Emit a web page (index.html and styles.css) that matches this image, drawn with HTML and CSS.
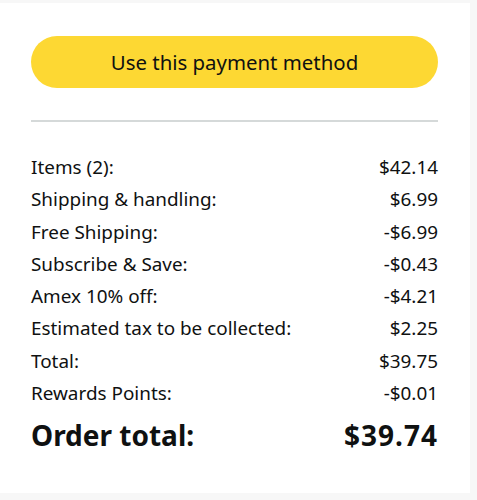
FILE: index.html
```html
<!DOCTYPE html>
<html>
<head>
<meta charset="utf-8">
<link rel="stylesheet" href="styles.css">
</head>
<body>
<div class="card">
  <button class="pay-btn">Use this payment method</button>
  <hr class="divider">
  <div class="summary">
    <div class="row"><span>Items (2):</span><span>$42.14</span></div>
    <div class="row"><span>Shipping &amp; handling:</span><span>$6.99</span></div>
    <div class="row"><span>Free Shipping:</span><span>-$6.99</span></div>
    <div class="row"><span>Subscribe &amp; Save:</span><span>-$0.43</span></div>
    <div class="row"><span>Amex 10% off:</span><span>-$4.21</span></div>
    <div class="row"><span>Estimated tax to be collected:</span><span>$2.25</span></div>
    <div class="row"><span>Total:</span><span>$39.75</span></div>
    <div class="row"><span>Rewards Points:</span><span>-$0.01</span></div>
    <div class="row total"><span>Order total:</span><span class="amt">$39.74</span></div>
  </div>
</div>
</body>
</html>
```
FILE: styles.css
```css
html, body {
  margin: 0;
  padding: 0;
}
body {
  background: #f7f7f7;
  font-family: "Noto Sans", "Open Sans", sans-serif;
  color: #0f1111;
  padding-top: 3px;
}
.card {
  width: 470px;
  height: 490px;
  box-sizing: border-box;
  background: #fff;
  padding: 33px 32px 0 31px;
}
.pay-btn {
  display: block;
  width: 100%;
  height: 52px;
  border: none;
  border-radius: 26px;
  background: #fdd833;
  color: #0f1111;
  font-family: inherit;
  font-size: 20.4px;
  padding: 0;
}
.divider {
  border: none;
  border-top: 2px solid #d5d9d9;
  margin: 32px 0 29px;
}
.summary {
  display: flex;
  flex-direction: column;
}
.row {
  display: flex;
  justify-content: space-between;
  font-size: 18.9px;
  line-height: 32.3px;
  height: 32.3px;
}
.row.total {
  font-size: 28px;
  font-weight: 700;
  line-height: 40px;
  height: 40px;
  margin-top: 6px;
}
.row.total .amt {
  letter-spacing: 1px;
}
```
